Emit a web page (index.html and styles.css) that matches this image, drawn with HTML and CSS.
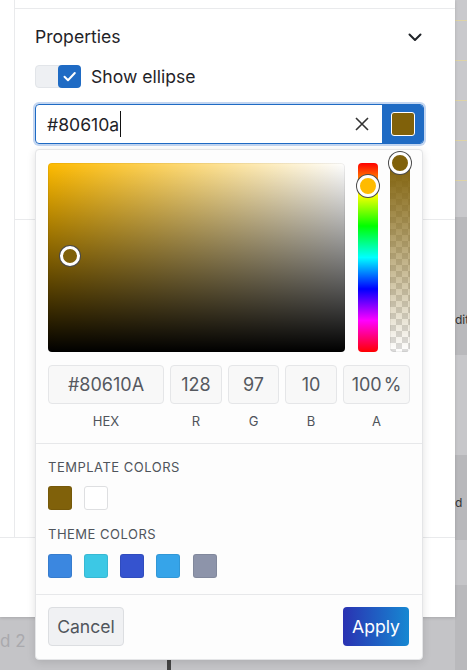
FILE: index.html
```html
<!DOCTYPE html>
<html lang="en">
<head>
<meta charset="utf-8">
<title>Properties</title>
<link rel="stylesheet" href="styles.css">
</head>
<body>
<div class="screen">
  <div class="left-col">
    <div class="panel">
      <div class="side">
        <div class="top-spacer"></div>
        <section class="props">
          <div class="props-head">
            <span class="props-title">Properties</span>
            <svg class="chevron" width="14" height="9" viewBox="0 0 14 9"><path d="M1.5 1.5 L7 7 L12.5 1.5" stroke="#1f2328" stroke-width="2" fill="none" stroke-linecap="round" stroke-linejoin="round"/></svg>
          </div>
          <div class="toggle-row">
            <span class="switch">
              <span class="knob">
                <svg width="23" height="23" viewBox="0 0 23 23"><path d="M6.5 11.8 L10 15.2 L16.8 8" stroke="#fff" stroke-width="2" fill="none" stroke-linecap="round" stroke-linejoin="round"/></svg>
              </span>
            </span>
            <span class="toggle-label">Show ellipse</span>
          </div>
          <div class="color-field">
            <div class="color-input">
              <span class="value">#80610a<span class="caret"></span></span>
              <svg class="clear" width="14" height="14" viewBox="0 0 14 14"><path d="M1 1 L13 13 M13 1 L1 13" stroke="#333" stroke-width="1.6" fill="none"/></svg>
              <span class="swatch-btn"><span class="swatch-chip"></span></span>
            </div>
            <div class="popover">
              <div class="pick-section">
                <div class="pickers">
                  <div class="sat">
                    <span class="thumb sat-thumb"></span>
                  </div>
                  <div class="hue">
                    <span class="thumb hue-thumb"></span>
                  </div>
                  <div class="alpha">
                    <div class="alpha-fill"></div>
                    <span class="thumb alpha-thumb"></span>
                  </div>
                </div>
                <div class="fields">
                  <div class="field">#80610A</div>
                  <div class="field">128</div>
                  <div class="field">97</div>
                  <div class="field">10</div>
                  <div class="field">100<span class="pct">%</span></div>
                  <div class="flabel">HEX</div>
                  <div class="flabel">R</div>
                  <div class="flabel">G</div>
                  <div class="flabel">B</div>
                  <div class="flabel">A</div>
                </div>
              </div>
              <div class="palette-section">
                <div class="pal-title">TEMPLATE COLORS</div>
                <div class="swatches">
                  <span class="sw sw-brown"></span>
                  <span class="sw sw-white"></span>
                </div>
                <div class="pal-title pal-title-2">THEME COLORS</div>
                <div class="swatches">
                  <span class="sw sw-1"></span>
                  <span class="sw sw-2"></span>
                  <span class="sw sw-3"></span>
                  <span class="sw sw-4"></span>
                  <span class="sw sw-5"></span>
                </div>
              </div>
              <div class="pop-footer">
                <button class="btn btn-cancel">Cancel</button>
                <button class="btn btn-apply">Apply</button>
              </div>
            </div>
          </div>
        </section>
        <section class="rest"></section>
      </div>
      <div class="panel-footer"></div>
    </div>
    <div class="below">
      <span class="below-text">d 2</span>
      <span class="below-bar"></span>
    </div>
  </div>
  <div class="strip">
    <div class="band b1"><i></i><i></i><i></i><i></i><i></i></div>
    <div class="band b2"><span class="strip-text">dit</span></div>
    <div class="band b3"></div>
    <div class="band b4"><span class="strip-text">d</span></div>
    <div class="band b5"></div>
    <div class="band b6"></div>
  </div>
</div>
</body>
</html>
```
FILE: styles.css
```css
* { box-sizing: border-box; }
html, body { margin: 0; padding: 0; }
body {
  font-family: Inter, "Noto Sans", "Liberation Sans", sans-serif;
  background: #c0c0c3;
  color: #1f2328;
}
.screen {
  display: flex;
  width: 467px;
  height: 670px;
  overflow: hidden;
}
.left-col {
  width: 455px;
  display: flex;
  flex-direction: column;
}
.panel {
  height: 617px;
  background: #fff;
  box-shadow: 0 1px 3px rgba(0,0,0,0.15);
  display: flex;
  flex-direction: column;
  position: relative;
  z-index: 1;
}
.side {
  margin-left: 14px;
  border-left: 1px solid #e9eaec;
  height: 537px;
  display: flex;
  flex-direction: column;
}
.top-spacer {
  height: 9px;
  border-bottom: 1px solid #e9eaec;
}
.props {
  height: 211px;
  border-bottom: 1px solid #e9eaec;
  padding: 16px 30px 0 20px;
}
.props-head {
  height: 24px;
  display: flex;
  align-items: center;
  justify-content: space-between;
}
.props-title {
  font-size: 17.6px;
  line-height: 24px;
  color: #1f2328;
}
.chevron { margin-right: 3px; }
.toggle-row {
  margin-top: 16px;
  height: 23px;
  display: flex;
  align-items: center;
}
.switch {
  width: 46px;
  height: 23px;
  background: #eef0f3;
  border: 1px solid #e2e5e9;
  border-radius: 4px;
  display: flex;
  justify-content: flex-end;
  position: relative;
}
.knob {
  width: 23px;
  height: 23px;
  margin: -1px -1px 0 0;
  background: #1f6bc4;
  border-radius: 4px;
  display: flex;
}
.toggle-label {
  margin-left: 10px;
  font-size: 17.6px;
  color: #1f2328;
}
.color-field {
  margin-top: 16px;
  position: relative;
  width: 389px;
}
.color-input {
  height: 40px;
  border: 1px solid #1f6bc4;
  border-radius: 4px;
  box-shadow: 0 0 0 2px #c3d6f1;
  display: flex;
  align-items: center;
  overflow: hidden;
}
.value {
  flex: 1;
  padding-left: 11px;
  font-size: 17.6px;
  color: #1f2328;
  display: flex;
  align-items: center;
}
.caret {
  display: inline-block;
  width: 1px;
  height: 26px;
  background: #111;
  margin-left: 1px;
}
.clear { margin-right: 13px; }
.swatch-btn {
  width: 41px;
  height: 100%;
  background: #1f6bc4;
  display: flex;
  align-items: center;
  justify-content: center;
}
.swatch-chip {
  width: 24px;
  height: 24px;
  background: #80610a;
  border: 1px solid #fff;
  border-radius: 3px;
}
.popover {
  position: absolute;
  top: 45px;
  left: 0;
  width: 388px;
  height: 511px;
  background: #fdfdfd;
  border: 1px solid #e4e5e7;
  border-radius: 4px;
  box-shadow: 0 2px 8px rgba(0,0,0,0.12);
  z-index: 5;
  display: flex;
  flex-direction: column;
}
.pick-section {
  padding: 13px 12px 14px 12px;
  border-bottom: 1px solid #e7e8ea;
}
.pickers {
  display: flex;
  height: 189px;
}
.sat {
  width: 297px;
  border-radius: 4px;
  position: relative;
  background:
    linear-gradient(to bottom, rgba(0,0,0,0), #000),
    linear-gradient(to right, #ffbb00, #fff);
  box-shadow: inset 0 0 0 1px rgba(0,0,0,0.06);
}
.hue {
  width: 20px;
  margin-left: 13px;
  border-radius: 4px;
  position: relative;
  background: linear-gradient(to bottom, #f00 0%, #ff0 16.66%, #0f0 33.33%, #0ff 50%, #00f 66.66%, #f0f 83.33%, #f00 100%);
}
.alpha {
  width: 20px;
  margin-left: 12px;
  border-radius: 4px;
  position: relative;
  background-color: #fff;
  background-image:
    linear-gradient(45deg, #dcdcdc 25%, transparent 25%, transparent 75%, #dcdcdc 75%),
    linear-gradient(45deg, #dcdcdc 25%, transparent 25%, transparent 75%, #dcdcdc 75%);
  background-size: 12px 12px;
  background-position: 0 0, 6px 6px;
  box-shadow: inset 0 0 0 1px rgba(0,0,0,0.06);
}
.alpha-fill {
  position: absolute;
  inset: 0;
  border-radius: 4px;
  background: linear-gradient(to bottom, #80610a, rgba(128,97,10,0));
}
.thumb {
  position: absolute;
  width: 22px;
  height: 22px;
  border-radius: 50%;
  border: 3px solid #fff;
  box-shadow: 0 0 0 1px #4a4a4a;
}
.sat-thumb {
  width: 20px;
  height: 20px;
  left: 12px;
  top: 83px;
  background: #80610a;
}
.hue-thumb {
  left: -1px;
  top: 12px;
  background: #ffbb00;
}
.alpha-thumb {
  left: -1px;
  top: -11px;
  background: #80610a;
}
.fields {
  margin-top: 13px;
  display: grid;
  grid-template-columns: 116px 52px 51px 52px 1fr;
  column-gap: 6px;
  row-gap: 9px;
}
.field {
  height: 39px;
  background: #f8f8f8;
  border: 1px solid #e5e6e8;
  border-radius: 4px;
  display: flex;
  align-items: center;
  justify-content: center;
  font-size: 18px;
  color: #55595f;
}
.pct { margin-left: 2px; }
.flabel {
  text-align: center;
  font-size: 13px;
  line-height: 16px;
  color: #4f545b;
}
.palette-section {
  padding: 15px 12px 16px 12px;
  border-bottom: 1px solid #e7e8ea;
}
.pal-title {
  font-size: 13px;
  line-height: 16px;
  color: #4f545b;
  letter-spacing: 0.5px;
}
.pal-title-2 { margin-top: 16px; }
.swatches {
  margin-top: 11px;
  display: flex;
  gap: 12px;
}
.pal-title-2 + .swatches { margin-top: 12px; }
.sw {
  width: 24px;
  height: 24px;
  border-radius: 3px;
  border: 1px solid rgba(0,0,0,0.08);
}
.sw-brown { background: #80610a; }
.sw-white { background: #fff; border-color: #dedfe1; }
.sw-1 { background: #3b87e0; }
.sw-2 { background: #3cc8e5; }
.sw-3 { background: #3553cf; }
.sw-4 { background: #36a4e9; }
.sw-5 { background: #8d94aa; margin-left: 1px; }
.pop-footer {
  padding: 12px 13px 13px 12px;
  display: flex;
  justify-content: space-between;
}
.btn {
  height: 39px;
  border-radius: 4px;
  font-family: inherit;
  font-size: 17.6px;
  padding: 0;
}
.btn-cancel {
  width: 76px;
  background: #f0f1f3;
  border: 1px solid #dcdee1;
  color: #50555c;
}
.btn-apply {
  width: 66px;
  border: none;
  color: #fff;
  background: linear-gradient(to right, #2a32b2, #1688d2);
}
.rest { flex: 1; }
.panel-footer {
  flex: 1;
  border-top: 1px solid #e9eaec;
}
.below {
  flex: 1;
  position: relative;
  background: #c4c4c7;
}
.below-text {
  position: absolute;
  left: 0;
  top: 14px;
  font-size: 17px;
  color: #a9a9ad;
}
.below-bar {
  position: absolute;
  left: 167px;
  top: 43px;
  width: 4px;
  height: 12px;
  background: #444;
}
.strip {
  flex: 1;
  display: flex;
  flex-direction: column;
  overflow: hidden;
}
.band { position: relative; }
.b1 {
  height: 217px;
  background: #c9c9cc;
  display: flex;
  flex-direction: column;
  padding-top: 20px;
  gap: 39px;
}
.b1 i {
  display: block;
  height: 1px;
  background: #ded3a6;
}
.b2 { height: 138px; background: #b9b9bc; }
.b3 { height: 100px; background: #c7c7ca; }
.b4 { height: 85px; background: #b8b8bb; }
.b5 { height: 45px; background: #c5c5c8; }
.b6 { flex: 1; background: #b9b9bc; }
.strip-text {
  position: absolute;
  left: 0;
  font-size: 12px;
  color: #333;
  white-space: nowrap;
}
.b2 .strip-text { top: 95px; }
.b4 .strip-text { top: 40px; }
```
